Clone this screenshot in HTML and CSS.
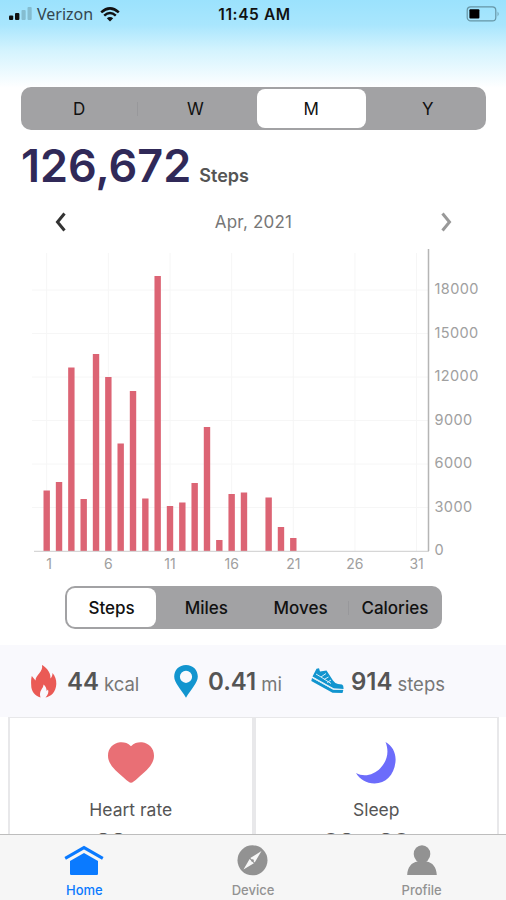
FILE: index.html
```html
<!DOCTYPE html>
<html lang="en">
<head>
  <meta charset="UTF-8" />
  <meta name="viewport" content="width=device-width, initial-scale=1.0" />
  <title>Activity</title>
  <link rel="stylesheet" href="styles.css">
</head>
<body>
  <header class="status-bar">
    <div class="carrier">
      <svg width="24" height="14" viewBox="0 0 24 14">
        <rect x="0" y="8.5" width="4.2" height="4.5" rx="1" />
        <rect x="6" y="6" width="4.4" height="7" rx="1" />
        <rect class="dim" x="12.5" y="3" width="4.2" height="10" rx="1" />
        <rect class="dim" x="18.5" y="0" width="4.2" height="13" rx="1" />
      </svg>
      <span>Verizon</span>
      <svg class="wifi" width="20" height="15" viewBox="0 0 20 15">
        <path d="M1.2 5.4 Q10 -2.6 18.8 5.4" />
        <path d="M4.2 8.6 Q10 3.4 15.8 8.6" />
        <path class="fill" d="M10 14.5 L6.8 11.3 Q10 8.6 13.2 11.3 Z" />
      </svg>
    </div>
    <div class="time">11:45 AM</div>
    <svg class="battery" width="34" height="16" viewBox="0 0 34 16">
      <rect class="case" x="1.2" y="0.9" width="28.6" height="14" rx="3.5" />
      <rect x="3.4" y="3.2" width="10" height="9.4" rx="1" />
      <path class="tip" d="M31.6 5.6 Q33.6 8 31.6 10.4 Z" />
    </svg>
  </header>

  <main>
    <div class="segment range">
      <button>D</button>
      <button class="divided">W</button>
      <button class="active">M</button>
      <button>Y</button>
    </div>

    <div class="total"><strong>126,672</strong><span>Steps</span></div>

    <div class="month">
      <svg class="prev" width="14" height="22" viewBox="0 0 14 22"><path d="M10.5 2.5 L3.5 11 L10.5 19.5" /></svg>
      <span>Apr, 2021</span>
      <svg class="next" width="14" height="22" viewBox="0 0 14 22"><path d="M3.5 2.5 L10.5 11 L3.5 19.5" /></svg>
    </div>

    <svg id="chart" class="chart" width="506" height="340" viewBox="0 240 506 340"></svg>

    <div class="segment metric">
      <button class="active">Steps</button>
      <button>Miles</button>
      <button>Moves</button>
      <button class="divided">Calories</button>
    </div>

    <section class="summary">
      <div class="stat kcal">
        <svg width="26" height="33" viewBox="0 0 26 33">
          <path fill="#ea5a55" d="M11 0 C13 1 20 6 19.5 13.5 C21 12 21.5 10 21.5 8 C24 11 25.5 14.5 25.3 19 C25 27 20 31.5 14.5 32.5 C17 30 18 27 17 24.5 L15.7 26 C15.5 23 14.5 21 12.5 19.5 C12.5 24 7.5 25 9.5 32.5 C4 31 0 26 0.2 20 C0 17 0 14 0.8 11 L4.5 15.5 C4.5 10 12.5 7 11 0 Z" />
        </svg>
        <strong>44</strong><span>kcal</span>
      </div>
      <div class="stat miles">
        <svg width="24" height="33" viewBox="0 0 24 33">
          <path fill="#1295cf" fill-rule="evenodd" d="M12 0 C5 0 0.2 5 0.2 11.5 C0.2 18 7 24 12 32.8 C17 24 23.8 18 23.8 11.5 C23.8 5 19 0 12 0 Z M12 5.7 A6.1 6.1 0 1 1 12 17.9 A6.1 6.1 0 1 1 12 5.7 Z" />
        </svg>
        <strong>0.41</strong><span>mi</span>
      </div>
      <div class="stat steps">
        <svg width="33" height="26" viewBox="0 0 33 26">
          <path fill="#1295cf" d="M5.5 0.7 L8 0.2 L9 3.5 L15.5 2.5 L22 12.5 Q24 15.5 27 16 L31 16.5 Q32.6 17 32.5 20 L32.5 21 L23 20.5 L1.5 8.5 Z" />
          <path fill="#1295cf" d="M1 10 L22.5 21.7 L32.3 22 L31.5 25 L21.5 24.7 L0.3 13 Z" />
          <path class="stitch" d="M10 9 L15 5.5 M13 11.5 L17.5 9 M16 14.5 L20 12 M5 6 L10 9 L20 15.5 M2.5 10.2 L22 21.1 L32 21.5" />
        </svg>
        <strong>914</strong><span>steps</span>
      </div>
    </section>

    <section class="cards">
      <article class="card">
        <svg width="46" height="41" viewBox="0 0 46 41">
          <path fill="#e96f75" d="M23 4.2 C26.5 0.8 30 0 34 0.3 C41 1 46 6.5 46 13.7 C46 22.5 38 29 31 35 Q25 40.8 23 40.8 Q21 40.8 15 35 C8 29 0 22.5 0 13.7 C0 6.5 5 1 12 0.3 C16 0 19.5 0.8 23 4.2 Z" />
        </svg>
        <h2>Heart rate</h2>
        <p><b>88</b></p>
      </article>
      <article class="card">
        <svg width="40" height="42" viewBox="0 0 40 42">
          <path fill="#6c6cfb" d="M29.5 0 C37 4 40.5 12 39.4 20.5 C38 33 29.5 41.5 18.5 41.5 C10.5 41.5 3.5 37 0 31 C8 35.5 18 33 24.5 26 C32 18 33 8.5 29.5 0 Z" />
        </svg>
        <h2>Sleep</h2>
        <p><b>08</b><b>30</b></p>
      </article>
    </section>
  </main>

  <nav class="tab-bar">
    <a class="tab active">
      <svg width="40" height="31" viewBox="0 0 40 31">
        <path class="roof" d="M1.2 13.4 L20 2.6 L38.8 13.4" />
        <path d="M6 16 L20 8 L34 16 V28.7 Q34 30 32.7 30 H7.3 Q6 30 6 28.7 Z" />
      </svg>
      <span>Home</span>
    </a>
    <a class="tab">
      <svg width="31" height="31" viewBox="0 0 31 31">
        <circle cx="15.5" cy="15.3" r="15" />
        <path class="needle" d="M24.5 6 L17.7 17.5 L13.3 13.1 Z M6.5 24.5 L12.6 13.9 L16.9 18.2 Z" />
        <circle cx="15.5" cy="15.5" r="1.3" />
      </svg>
      <span>Device</span>
    </a>
    <a class="tab">
      <svg width="30" height="31" viewBox="0 0 30 31">
        <ellipse cx="15" cy="9" rx="8.3" ry="8.7" />
        <path d="M10.5 14 H19.5 V16.5 C25.5 17.5 29.5 22 29.8 30 H0.2 C0.5 22 4.5 17.5 10.5 16.5 Z" />
      </svg>
      <span>Profile</span>
    </a>
  </nav>

  <script>
    const steps = [4172, 4759, 12655, 3586, 13586, 12000, 7414, 11034, 3621, 18966, 3103,
      3345, 4690, 8552, 759, 3931, 4034, 0, 3690, 1655, 897];
    const BASE = 551;
    const PER_STEP = 43.5 / 3000;
    const dayX = day => 46.7 + (day - 1) * 12.33;

    function drawChart() {
      let svg = "";
      for (let v = 0; v <= 18000; v += 3000) {
        const y = BASE - v * PER_STEP;
        if (v) svg += `<path class="grid" d="M32 ${y} H428" />`;
        svg += `<text class="y-label" x="434.5" y="${y + 4}">${v}</text>`;
      }
      for (let d = 1; d <= 31; d += 5) {
        svg += `<path class="grid" d="M${dayX(d)} 253 V551" />`;
        svg += `<text class="x-label" x="${dayX(d) + (d === 1 ? 2.3 : 0)}" y="569">${d}</text>`;
      }
      steps.forEach((v, i) => {
        const h = v * PER_STEP;
        svg += `<rect class="bar" x="${dayX(i + 1) - 3.2}" y="${BASE - h}" width="6.4" height="${h}" />`;
      });
      svg += `<path class="axis-x" d="M34 551.3 H429" /><path class="axis-y" d="M428.5 249 V551" />`;
      document.getElementById("chart").innerHTML = svg;
    }

    drawChart();
  </script>
</body>
</html>
```
FILE: styles.css
```css
* {
  box-sizing: border-box;
}
body {
  margin: 0;
  height: 900px;
  overflow: hidden;
  display: flex;
  flex-direction: column;
  font-family: Inter, "Liberation Sans", sans-serif;
  color: #555;
  background: linear-gradient(#9be2fd 0, #a9e6fd 25px, #d3f3fe 50px, #fff 88px);
}
svg {
  display: block;
  flex-shrink: 0;
}
.status-bar {
  height: 28px;
  flex-shrink: 0;
  display: grid;
  grid-template-columns: 1fr auto 1fr;
  align-items: center;
  padding: 0 6px 0 9px;
  color: #111;
}
.carrier {
  display: flex;
  align-items: center;
  font: 16px "Noto Sans", sans-serif;
  color: #33474f;
}
.carrier span {
  margin: 0 7px 0 4px;
}
.carrier svg {
  fill: #111;
}
.carrier .dim {
  fill: #85bdd0;
}
.carrier .wifi path {
  fill: none;
  stroke: #111;
  stroke-width: 2.5;
}
.carrier .wifi .fill {
  fill: #111;
  stroke: none;
}
.time {
  font-size: 15.5px;
  font-weight: 600;
  letter-spacing: 0.6px;
}
.battery {
  justify-self: end;
}
.battery .case {
  fill: none;
  stroke: #6695a5;
  stroke-width: 1.2;
}
.battery .tip {
  fill: #6695a5;
}
main {
  flex: 1;
  min-height: 0;
  overflow: hidden;
}
.segment {
  display: grid;
  grid-template-columns: repeat(4, 1fr);
  height: 43px;
  padding: 2px 0;
  border-radius: 10px;
  background: #a2a2a4;
}
.segment button {
  margin: 0;
  padding: 0;
  border: 0;
  border-radius: 8px;
  background: none;
  font: 500 17px Inter, sans-serif;
  color: #111;
}
.segment .active {
  margin: 0 3px 0 2px;
  background: #fff;
}
.segment .divided {
  border-radius: 0;
  background: linear-gradient(#98989b, #98989b) left center / 1px 14px no-repeat;
}
.range {
  width: 465px;
  margin: 59px 0 0 21px;
}
.range button {
  font-weight: 400;
}
.range .active {
  margin: 0 4px 0 3px;
}
.total {
  height: 74px;
  display: flex;
  align-items: baseline;
  gap: 8px;
  padding: 8px 0 0 21px;
}
.total strong {
  font-size: 45px;
  line-height: 56px;
  font-weight: 600;
  color: #302958;
}
.total span {
  font-size: 18px;
  font-weight: 600;
}
.month {
  height: 36px;
  display: flex;
  align-items: center;
  justify-content: space-between;
  padding: 0 53px 0 54px;
  font-size: 17px;
  letter-spacing: 0.2px;
  color: #777;
}
.month path {
  fill: none;
  stroke-width: 3;
}
.prev path {
  stroke: #333;
}
.next path {
  stroke: #999;
}
.chart {
  margin-bottom: 6px;
}
.grid {
  stroke: #f6f6f6;
  stroke-width: 1;
}
.bar {
  fill: #dc6474;
}
.axis-x {
  stroke: #ccc;
}
.axis-y {
  stroke: #b5b5b5;
  stroke-width: 1.5;
}
.y-label, .x-label {
  font-size: 14.5px;
  letter-spacing: 0.4px;
  fill: #a0a0a0;
}
.x-label {
  font-size: 14px;
  letter-spacing: 0;
  text-anchor: middle;
}
.metric {
  width: 377px;
  margin-left: 65px;
}
.summary {
  height: 72px;
  margin-top: 16px;
  display: flex;
  padding: 0 0 0 31px;
  background: #f9f9fd;
}
.stat {
  display: flex;
  align-items: center;
}
.stat strong {
  font-size: 24px;
  font-weight: 600;
}
.stat span {
  font-size: 18.5px;
  margin: 5px 0 0 5px;
  color: #777;
}
.kcal {
  width: 143px;
}
.kcal strong, .miles strong {
  margin-left: 10px;
}
.miles {
  width: 137px;
}
.steps strong {
  margin-left: 7px;
}
.stitch {
  fill: none;
  stroke: #d7eef8;
  stroke-width: 1;
}
.cards {
  display: grid;
  grid-template-columns: 1fr 1fr;
  padding: 0 7px 0 8px;
}
.card {
  height: 190px;
  display: flex;
  flex-direction: column;
  align-items: center;
  padding-top: 24px;
  border: 2px solid #e8e8ea;
  border-top-width: 1px;
  background: #fff;
}
.card h2 {
  margin: auto 0 0;
  font-size: 17.5px;
  line-height: 24px;
  font-weight: 400;
}
.card p {
  display: flex;
  gap: 24px;
  margin: 7px 20px 48px 0;
  line-height: 28px;
}
.card:first-child p {
  margin-right: 40px;
}
.card b {
  font-size: 24px;
  font-weight: 600;
}
.tab-bar {
  height: 66px;
  flex-shrink: 0;
  display: grid;
  grid-template-columns: repeat(3, 1fr);
  border-top: 1px solid #bdbdbd;
  background: #f6f6f6;
}
.tab {
  display: flex;
  flex-direction: column;
  align-items: center;
  padding-top: 10px;
  font-size: 13px;
  line-height: 16px;
  font-weight: 500;
  color: #929292;
}
.tab svg {
  fill: #929292;
  margin-bottom: 6px;
}
.tab .needle {
  fill: #f6f6f6;
}
.tab.active {
  color: #0a7aff;
}
.tab.active svg {
  fill: #0a7aff;
}
.tab .roof {
  fill: none;
  stroke: #0a7aff;
  stroke-width: 3;
}
```
